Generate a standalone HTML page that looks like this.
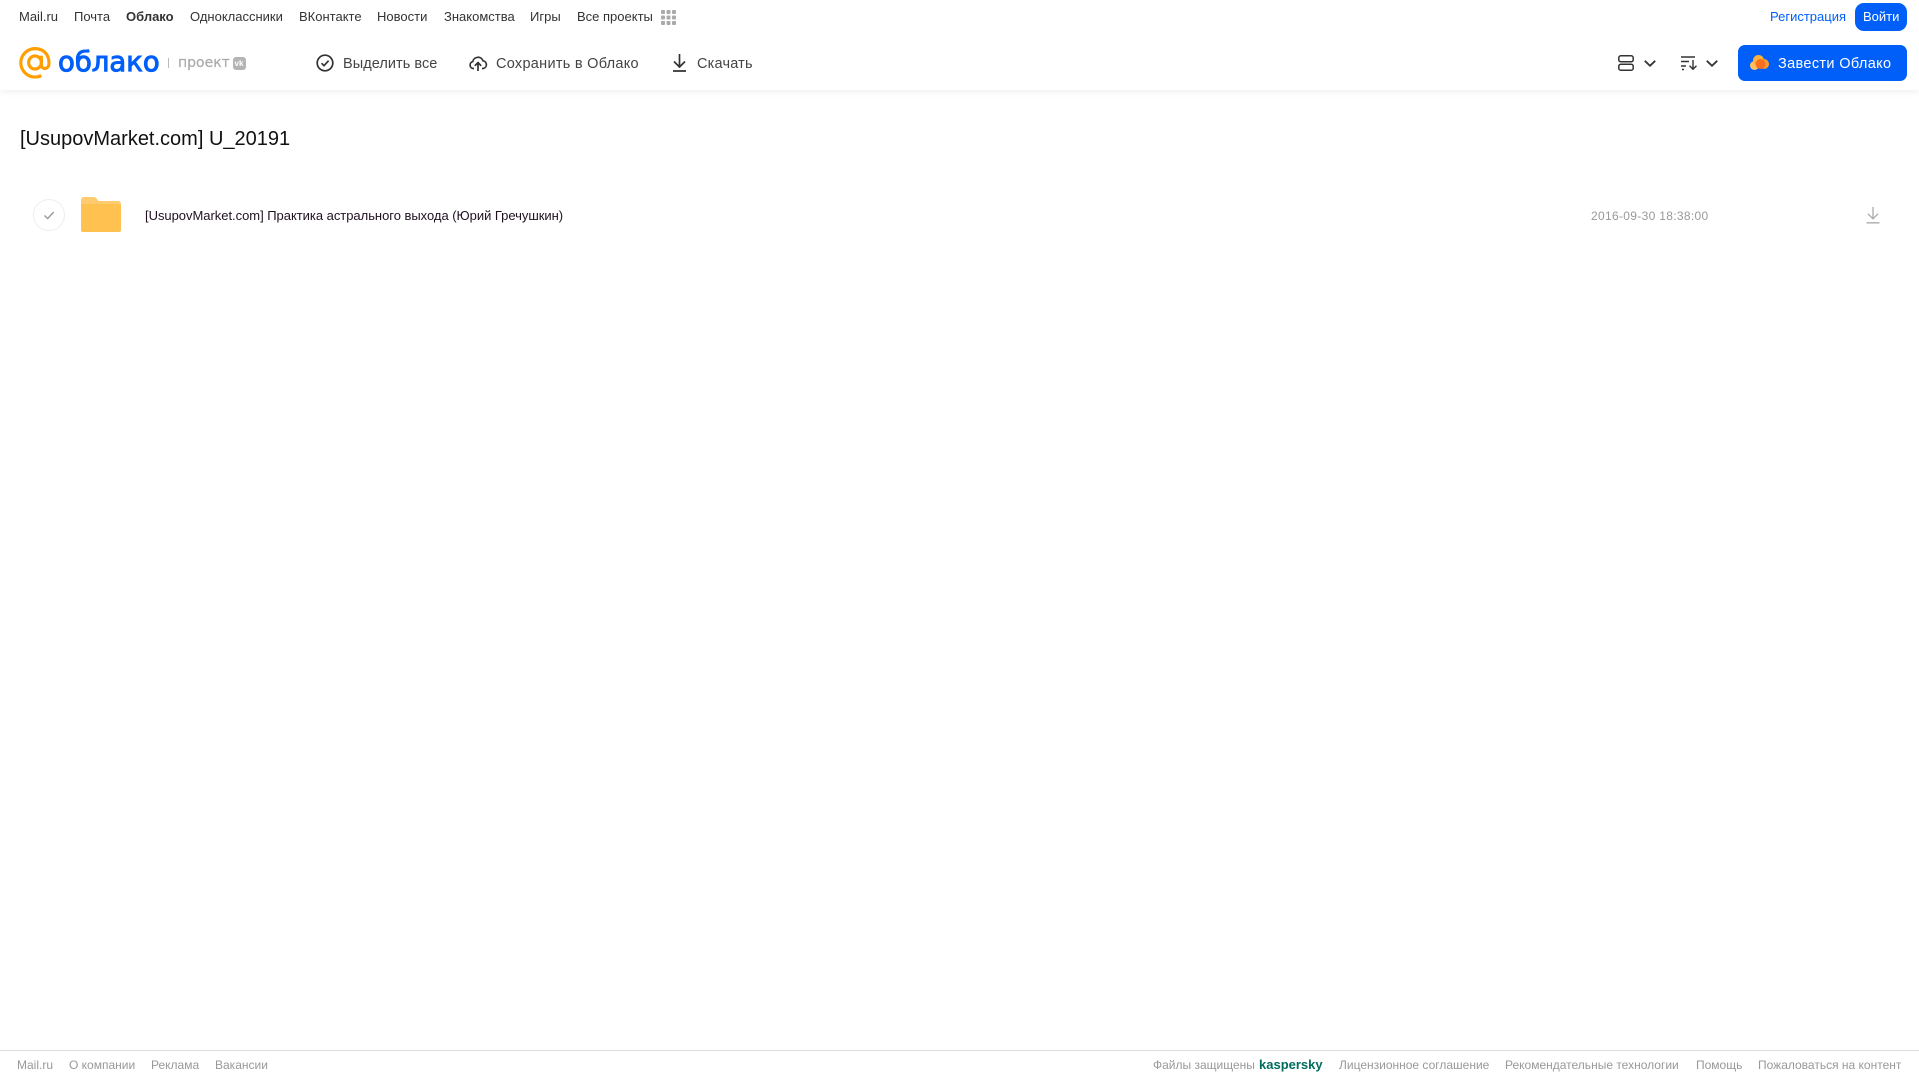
<!DOCTYPE html>
<html lang="ru"><head><meta charset="utf-8"><title>Облако</title>
<style>
html,body{margin:0;padding:0;width:1919px;height:1079px;overflow:hidden;background:#fff;font-family:"Liberation Sans",Arial,sans-serif}
.t{position:absolute;white-space:nowrap;line-height:20px}
svg{position:absolute;overflow:visible}
.n{top:7px;font-size:13px;color:#333}
.h{top:53.500px;font-size:14.5px;color:#444;letter-spacing:.35px}
.f{top:1055px;font-size:12px;color:#999}
#hdr{position:absolute;left:0;top:0;width:1919px;height:90px;background:#fff;box-shadow:0 1px 8px rgba(0,0,0,.08)}
</style></head><body>
<div id="hdr"></div>
<span class="t n" style="left:19px">Mail.ru</span>
<span class="t n" style="left:74px">Почта</span>
<span class="t n" style="left:126px;font-weight:bold">Облако</span>
<span class="t n" style="left:190px">Одноклассники</span>
<span class="t n" style="left:299px">ВКонтакте</span>
<span class="t n" style="left:377px">Новости</span>
<span class="t n" style="left:444px">Знакомства</span>
<span class="t n" style="left:530px">Игры</span>
<span class="t n" style="left:577px">Все проекты</span>
<svg style="left:661px;top:10px" width="15" height="15" fill="#aaa"><rect width="4" height="4" rx="1"/><rect x="5.500" width="4" height="4" rx="1"/><rect x="11" width="4" height="4" rx="1"/><rect y="5.500" width="4" height="4" rx="1"/><rect x="5.500" y="5.500" width="4" height="4" rx="1"/><rect x="11" y="5.500" width="4" height="4" rx="1"/><rect y="11" width="4" height="4" rx="1"/><rect x="5.500" y="11" width="4" height="4" rx="1"/><rect x="11" y="11" width="4" height="4" rx="1"/></svg>
<span class="t n" style="left:1770px;color:#005ff9">Регистрация</span>
<div style="position:absolute;left:1855px;top:3px;width:52px;height:28px;border-radius:9px;background:#005ff9"></div>
<span class="t n" style="left:1863px;color:#fff">Войти</span>

<svg style="left:19px;top:47px" width="32" height="32" fill="none" stroke="#ff9e00" stroke-width="3.300" viewBox="0 0 34 33" preserveAspectRatio="none"><circle cx="17" cy="16" r="6.800"/><path d="M23.800 9v9.500c0 5 7.800 5 8-1C32.300 7 25.500 1.700 17 1.700 8.800 1.700 1.900 8.300 1.900 16.300S8.800 31 17 31c2.500 0 4.700-.5 6.700-1.500"/></svg>
<span class="t" style="left:58px;top:47px;line-height:30px;font-family:'DejaVu Sans',sans-serif;font-size:27.500px;color:#005ff9;-webkit-text-stroke:1px #005ff9">облако</span>
<div style="position:absolute;left:168px;top:58px;width:1px;height:10px;background:#bbb"></div>
<span class="t" style="left:178px;top:53px;font-family:'DejaVu Sans',sans-serif;font-size:14px;color:#aaa;-webkit-text-stroke:.2px #aaa">проект</span>
<div style="position:absolute;left:233px;top:57px;width:13px;height:13px;border-radius:3px;background:#b4b4b4"></div>
<span class="t" style="left:234.500px;top:58px;line-height:11px;font-size:8px;font-weight:bold;color:#fff">vk</span>

<svg style="left:316px;top:54px" width="18" height="18" fill="none" stroke="#333" stroke-width="1.700"><circle cx="9" cy="9" r="7.800"/><path d="M5.500 9.200l2.500 2.500 4.600-5"/></svg>
<span class="t h" style="left:343px;letter-spacing:.05px">Выделить все</span>
<svg style="left:469px;top:54px" width="18" height="18" fill="none" stroke="#333" stroke-width="1.700"><path d="M5 14.500H4.300A3.500 3.500 0 0 1 3.800 7.600 5.300 5.300 0 0 1 14 6.800a3.900 3.900 0 0 1 .2 7.700H13"/><path d="M9 17V9M5.800 11.800L9 8.600l3.200 3.200"/></svg>
<span class="t h" style="left:496px;letter-spacing:.28px">Сохранить в Облако</span>
<svg style="left:672px;top:54px" width="15" height="18" fill="none" stroke="#333" stroke-width="1.700"><path d="M7.500 0v12.500M2 7.500l5.500 5.500L13 7.500M1 17h13"/></svg>
<span class="t h" style="left:697px;letter-spacing:.2px">Скачать</span>

<svg style="left:1618px;top:55px" width="16" height="16" fill="none" stroke="#333" stroke-width="1.500"><rect x=".8" y=".8" width="14.400" height="6" rx="2"/><rect x=".8" y="9.200" width="14.400" height="6" rx="2"/></svg>
<svg style="left:1644px;top:60px" width="12" height="7" fill="none" stroke="#333" stroke-width="1.800"><path d="M.8.800L6 5.800 11.200.800"/></svg>
<svg style="left:1681px;top:56px" width="17" height="14" fill="none" stroke="#333" stroke-width="1.400"><path d="M0 1h14M0 5.500h8M0 10h5M1 13.500h2M12 4v9M8.500 9.800L12 13.300l3.500-3.500"/></svg>
<svg style="left:1706px;top:60px" width="12" height="7" fill="none" stroke="#333" stroke-width="1.800"><path d="M.8.800L6 5.800 11.200.800"/></svg>
<div style="position:absolute;left:1738px;top:45px;width:169px;height:36px;border-radius:7px;background:#005ff9"></div>
<svg style="left:1750px;top:55px" width="19" height="15"><circle cx="4.500" cy="10.500" r="4.500" fill="#ffc061"/><circle cx="8.500" cy="5.500" r="5.500" fill="#ffb238"/><circle cx="14" cy="9" r="5" fill="#ff9a2e"/><circle cx="10.500" cy="9" r="5" fill="#f8701f"/></svg>
<span class="t h" style="left:1778px;color:#fff">Завести Облако</span>

<span class="t" style="left:20px;top:128px;line-height:22px;font-size:20px;color:#111">[UsupovMarket.com] U_20191</span>

<svg style="left:33px;top:199px" width="32" height="32" fill="none"><circle cx="16" cy="16" r="15.500" stroke="#eeeeee"/><path d="M11.500 16.500l3.200 3 6-6.500" stroke="#999" stroke-width="1.400"/></svg>
<svg style="left:81px;top:197px" width="40" height="36" viewBox="0 0 40 36"><path d="M0 3a3 3 0 0 1 3-3h9c2 0 3 .8 4 2l1.500 2H37a3 3 0 0 1 3 3v5H0z" fill="#ffcb6e"/><path d="M0 7h37a3 3 0 0 1 3 3v23a2 2 0 0 1-2 2H2a2 2 0 0 1-2-2z" fill="#ffc14f"/></svg>
<span class="t" style="left:145px;top:206px;font-size:13px;letter-spacing:-.03px;color:#201020">[UsupovMarket.com] Практика астрального выхода (Юрий Гречушкин)</span>
<span class="t" style="left:1591px;top:206px;font-size:12px;letter-spacing:.32px;color:#999">2016-09-30 18:38:00</span>
<svg style="left:1866px;top:207px" width="14" height="17" fill="none" stroke="#aaa" stroke-width="1.300"><path d="M7 0v11.500M2 6.800l5 5 5-5M.5 15.800h13"/></svg>

<div style="position:absolute;left:0;top:1050px;width:1919px;height:1px;background:#dcdcdc"></div>
<span class="t f" style="left:17px">Mail.ru</span>
<span class="t f" style="left:69px">О компании</span>
<span class="t f" style="left:151px">Реклама</span>
<span class="t f" style="left:215px">Вакансии</span>
<span class="t f" style="left:1153px">Файлы защищены</span>
<span class="t f" style="left:1259px;font-size:13px;font-weight:bold;color:#006d5c">kaspersky</span>
<span class="t f" style="left:1339px">Лицензионное соглашение</span>
<span class="t f" style="left:1505px">Рекомендательные технологии</span>
<span class="t f" style="left:1696px">Помощь</span>
<span class="t f" style="left:1758px">Пожаловаться на контент</span>
</body></html>
